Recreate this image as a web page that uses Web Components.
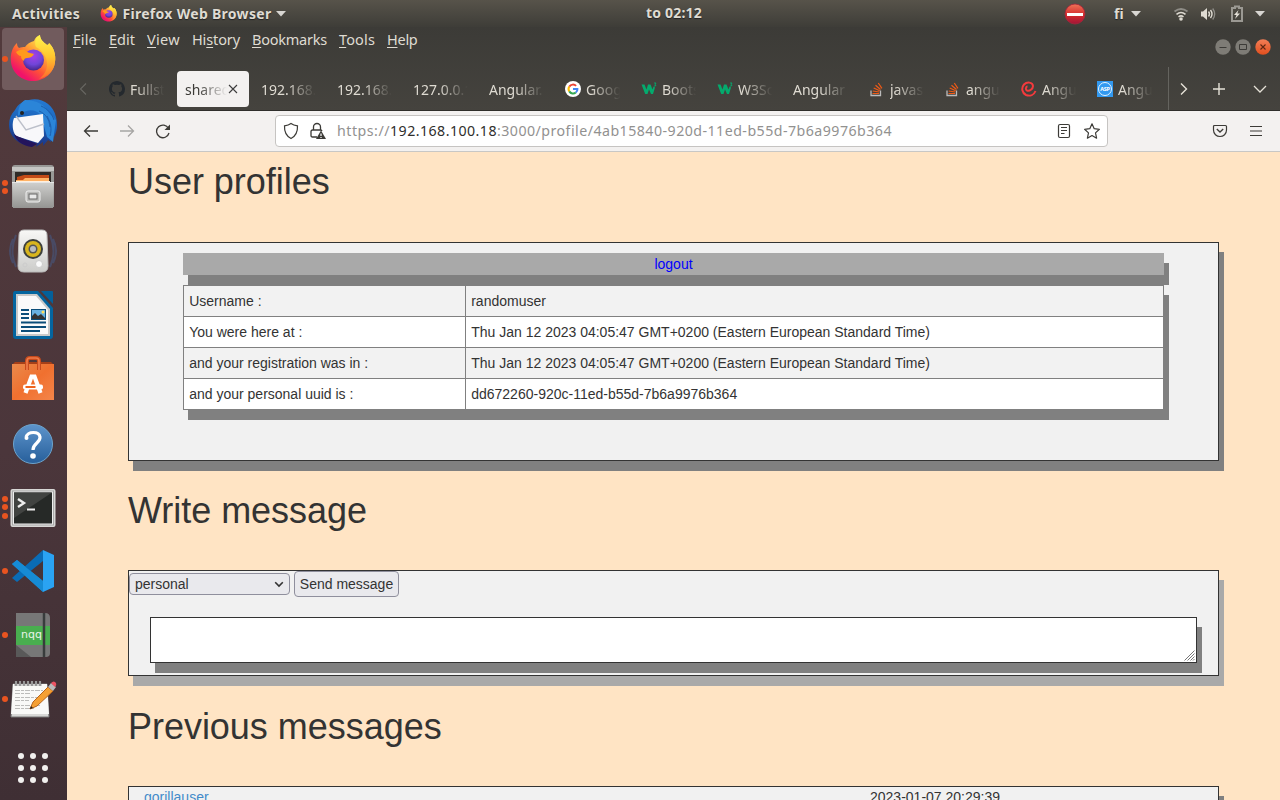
<!DOCTYPE html>
<html lang="en">
<head>
<meta charset="utf-8">
<title>User profiles</title>
<style>
html,body{margin:0;height:800px;overflow:hidden}
body{font-family:"Noto Sans","Open Sans",sans-serif;font-size:14.5px;background:#3c3b37}
</style>
</head>
<body>
<desk-top></desk-top>
<script>
const ICONS = {
firefox:[48,48,`<defs><linearGradient id="a" x1=".85" y1=".1" x2=".2" y2=".95"><stop offset=".05" stop-color="#fff44f"/><stop offset=".35" stop-color="#ffa436"/><stop offset=".62" stop-color="#ff5634"/><stop offset=".9" stop-color="#f0136a"/></linearGradient><radialGradient id="b" cx=".5" cy=".3" r=".7"><stop offset="0" stop-color="#a63ee8"/><stop offset=".6" stop-color="#7045d8"/><stop offset="1" stop-color="#45278d"/></radialGradient><linearGradient id="c" x1=".6" y1="0" x2=".6" y2="1"><stop offset="0" stop-color="#fff44f"/><stop offset=".5" stop-color="#ffc52e"/><stop offset="1" stop-color="#ff6a2c"/></linearGradient></defs>
<path d="M8 8c0 2 .6 4 2 5 2-1 4-1 6-1 2-3 5-5 9-6 1-3 3-5 6-6 0 4 3 7 7 10 1 0 2-1 2-2 5 5 7 12 6 19-1 11-11 19-22 19S3 38 2 27C1 20 3 12 8 8z" fill="url(#a)"/>
<circle cx="24.500" cy="25" r="10.500" fill="url(#b)"/>
<path d="M31 0c0 4 3 7 7 10 1 0 2-1 2-2 5 5 7 12 6 19-1 9-8 15-16 17 7-5 10-13 7-21-2-5-6-9-10-11-2-5 0-10 4-12z" fill="url(#c)"/>
<path d="M7 17c3-2 6-3 9-2 2 2 4 3 9 4-2 3-4 4-7 4-2 0-3 1-3 3-2-1-3-3-3-5-2 0-4-2-5-4z" fill="#ff9a1c"/>`],
thunderbird:[50,50,`<defs><linearGradient id="a" x1=".6" y1="0" x2=".4" y2="1"><stop offset="0" stop-color="#2479d2"/><stop offset=".5" stop-color="#1b62b8"/><stop offset="1" stop-color="#1c2c7c"/></linearGradient></defs>
<path d="M21 2c12-3 24 4 27 17 2 8 1 15-2 20l-1-3-2 8-3-2-5 6v-4l-7 5 1-4-6 3C10 47 1 38 1 27c0-6 2-11 6-15 3-6 8-9 14-10z" fill="url(#a)"/>
<path d="M17 2c12 0 20 5 24 13l7 7-3 22-6-5-6-22C27 10 17 11 10 18c0-8 2-13 7-16z" fill="#2b85d8"/>
<path d="M33 8c7 3 11 8 13 14M31 13c7 3 10 8 11 16m-3-11c4 7 5 13 3 20" stroke="#1c5fae" fill="none"/>
<path d="M6 20l29-4 1 22-6 7L8 38C4 33 4 25 6 20z" fill="#f8f8fa"/><path d="M8 18l10 14 18-6" fill="none" stroke="#bcc0ca" stroke-width="1.400"/>
<path d="M6 36c5 4 14 6 23 10l-5 3C15 48 8 43 6 36z" fill="#23145c"/><circle cx="14" cy="15" r="2" fill="#222"/>`],
files:[44,46,`<defs><linearGradient id="a" x2="0" y2="1"><stop stop-color="#d0d0ce"/><stop offset="1" stop-color="#949492"/></linearGradient></defs><path d="M1 4q0-3 3-3h36q3 0 3 3v39H1z" fill="#989896"/><path d="M1 3h42v4H1z" fill="#c5c5c3"/><path d="M4 8h36v11H4z" fill="#302a27"/><path d="M6 13l7-2h25v8H6z" fill="#c44a16"/><path d="M5 16h7l2-2h24v6H5z" fill="#ffb265"/><path d="M5 17h34v3H5z" fill="#fff0de"/><path d="M1 18h42l-1 26H2z" fill="url(#a)"/><path d="M1 18.500h42" stroke="#e5e5e5"/><rect x="15" y="27" width="14" height="11" rx="2" fill="#bcbcba" stroke="#f0f0f0"/><rect x="18" y="30" width="8" height="5" fill="#e9e9e9" stroke="#666"/>`],
speaker:[48,48,`<path d="M7 8q-7 16 0 32M4 12q-6 12 0 24M41 8q7 16 0 32m3-28q6 12 0 24" fill="none" stroke="#46577e" stroke-width="2" opacity=".6"/><defs><linearGradient id="a" x2="0" y2="1"><stop stop-color="#f8f8f6"/><stop offset="1" stop-color="#ccccca"/></linearGradient></defs><path d="M10 8q0-5 5-5h18q5 0 5 5l1 31q0 6-6 6H15q-6 0-6-6z" fill="url(#a)" stroke="#bbb"/><circle cx="24" cy="22" r="10" fill="#3d403d"/><circle cx="24" cy="22" r="8" fill="#d8b51e"/><circle cx="24" cy="22" r="4.500" fill="#555"/><circle cx="24" cy="22" r="3" fill="#b8bcc0"/><circle cx="30" cy="37" r="3.500" fill="#fafafa" stroke="#ccc"/><circle cx="16" cy="38" r="2" fill="none" stroke="#ccc"/>`],
writer:[42,50,`<path d="M3 1h23l15 17v28q0 3-3 3H4q-3 0-3-3V4q0-3 2-3z" fill="#04659f"/><path d="M29 1h11q1 0 1 1v12z" fill="#04609a"/><path d="M4 4h21l13 15v27H4z" fill="#c9c9c9"/><path d="M6 6h18l12 14v24H6z" fill="#fafafa"/><path d="M9 20h8M9 24h8M9 28h8M9 32.500h25M9 37h25M9 41h19" stroke="#0b4d79" stroke-width="2"/><path d="M19 19h15v11H19z" fill="#0b4d79"/><path d="M20 20h13v9H20z" fill="#68b1e2"/><path d="M20 29v-3l3-3 3 3 3-2 4 4v1z" fill="#333"/><circle cx="31" cy="22" r="1.500" fill="#ffdf5c"/>`],
software:[44,46,`<defs><linearGradient id="a" x2="1" y2="1"><stop stop-color="#e98a4c"/><stop offset=".5" stop-color="#f0702f"/><stop offset="1" stop-color="#f4854a"/></linearGradient></defs><path d="M1 9l3-3h36l3 3z" fill="#a63f18"/><path d="M1 8h42v36H1z" fill="url(#a)"/><path d="M16 14V5q0-3 3-3h6q3 0 3 3v9" fill="none" stroke="#c94b1c" stroke-width="4"/><path d="M16 14V5q0-3 3-3h6q3 0 3 3v9" fill="none" stroke="#ef7b49" stroke-width="1.700"/><path d="M14.500 37l6-16.500h3l6 16.500" fill="none" stroke="#fff" stroke-width="4.200"/><rect x="12" y="28.500" width="20" height="5" rx="2" fill="#fff"/><rect x="14.500" y="30" width="10" height="2" fill="#ef641d"/>`],
help:[42,42,`<defs><linearGradient id="a" x2="0" y2="1"><stop stop-color="#5d94cb"/><stop offset="1" stop-color="#275f9b"/></linearGradient></defs><circle cx="21" cy="21" r="19.500" fill="url(#a)" stroke="#6da4cc"/><path d="M14 14c2-6 13-6 14 0 .6 6-7 6-7 13" fill="none" stroke="#fff" stroke-width="3.200"/><circle cx="14.500" cy="15" r="2" fill="#fff"/><circle cx="21" cy="33" r="2.800" fill="#fff"/>`],
terminal:[46,40,`<rect x=".5" y="1" width="45" height="38" rx="2" fill="#d7d7d5"/><rect x="2.500" y="3" width="41" height="34" fill="#eee" stroke="#aaa"/><rect x="4" y="4.500" width="38" height="31" fill="#262927"/><path d="M4 4.500h38L4 30z" fill="#414341"/><path d="M8 11l6 4-6 4" fill="none" stroke="#eee" stroke-width="2.400"/><path d="M17 21.500h8" stroke="#eee" stroke-width="2"/>`],
vscode:[42,44,`<path d="M0 15l5-4 26 21v11L0 15z" fill="#1688d1"/><path d="M0 29l5 4L31 12V1L0 29z" fill="#0a6cb6"/><path d="M0 15l5-4 26 21v11z" fill="#168bd5"/><path d="M31 1l11 5v32l-11 5z" fill="#2aa3f3"/>`],
nqq:[36,46,`<path d="M1 1h29q5 0 5 5v35q0 4-4 4H1z" fill="#777"/><path d="M1 33l15 12H1z" fill="#595959"/><path d="M1 14h34v19H1z" fill="#49ae4f"/><path d="M29 1v44" stroke="#383c3c" stroke-width="2.500"/><text x="6" y="26" font-size="11" textLength="21" fill="#e8f4e8" font-family="DejaVu Sans">nqq</text>`],
notes:[48,40,`<path d="M4 5h34l2 33H2z" fill="#d8d8d6" stroke="#777"/><path d="M4 5h34l2 30H2z" fill="#f9f9f7"/><path d="M6 11.500h28M6 14.500h16M6 18.500h24M6 21.500h14M6 26.500h26M6 29.500h20" stroke="#bcbcba" stroke-dasharray="5 1 3 1"/><path d="M7 7V2M11 7V2M15 7V2M19 7V2M23 7V2M27 7V2M31 7V2" stroke="#555" stroke-width="2.500"/><path d="M7 7V2M11 7V2M15 7V2M19 7V2M23 7V2M27 7V2M31 7V2" stroke="#ddd"/><path d="M21 30l3-7 15-15 5 4-16 15z" fill="#f5a033" stroke="#b8651b"/><path d="M39 8l3-4 5 4-3 4z" fill="#b9b9b9"/><path d="M42 4q3-3 5 0 1 2-1 4z" fill="#ec5262"/><path d="M21 30l1-3 2 2z" fill="#222"/>`],
grid:[30,30,[3,15,27].map(y=>[3,15,27].map(x=>`<circle cx="${x}" cy="${y}" r="3" fill="#f1f0ee"/>`).join('')).join('')],
tri:[10,6,`<path d="M0 0h10L5 5.500z" fill="#d8d6d2"/>`],
stop:[22,22,`<defs><linearGradient id="a" x2="0" y2="1"><stop stop-color="#f07458"/><stop offset=".55" stop-color="#d42a2c"/><stop offset="1" stop-color="#a01538"/></linearGradient></defs><circle cx="11" cy="11" r="10" fill="url(#a)" stroke="#a8243a" stroke-width=".8"/><path d="M3 10h16v3H3z" fill="#fff"/>`],
wifi:[16,14,`<path d="M1.500 4.500q6.500-5 13 0" fill="none" stroke="#8e8c86" stroke-width="1.800"/><path d="M3.500 7.300q4.500-3.500 9 0M5.500 9.800q2.500-1.800 5 0" fill="none" stroke="#dfdbd2" stroke-width="1.600"/><circle cx="8" cy="12" r="1.800" fill="#dfdbd2"/>`],
sound:[16,14,`<path d="M1 4.500h2L7 1v12L3 9.500H1z" fill="#dfdbd2"/><path d="M8.500 4.500q2 2.500 0 5M10.500 3q3 4 0 8" fill="none" stroke="#dfdbd2" stroke-width="1.400"/><path d="M12.700 1.500q4 5.500 0 11" fill="none" stroke="#8e8c86" stroke-width="1.300"/>`],
battery:[14,18,`<path d="M5 3V1.500h4V3h3v13H2V3z" fill="none" stroke="#9b9993" stroke-width="2"/><path d="M8.500 5L4 10h2.500L5 14l5-5.500H7.300z" fill="#e5e1d8"/>`],
min:[16,16,`<circle cx="8" cy="8" r="7.700" fill="#7e7c76"/><path d="M4.500 8.500h7" stroke="#3c3b37"/>`],
max:[16,16,`<circle cx="8" cy="8" r="7.700" fill="#7e7c76"/><path d="M4.500 5.500h7v5h-7z" fill="none" stroke="#3c3b37"/>`],
close:[16,16,`<defs><linearGradient id="a" x2="0" y2="1"><stop stop-color="#f37e56"/><stop offset="1" stop-color="#e14f1e"/></linearGradient></defs><circle cx="8" cy="8" r="7.700" fill="url(#a)"/><path d="M5.500 5.500l5 5m0-5l-5 5" stroke="#5e2713" stroke-width="1.100"/>`],
left:[8,14,`<path d="M7 1.500L1.500 7 7 12.500" fill="none" stroke="#686762" stroke-width="1.100"/>`],
right:[8,14,`<path d="M1 1.500L6.500 7 1 12.500" fill="none" stroke="#e6e2d8" stroke-width="1.400"/>`],
down:[14,8,`<path d="M1 1l6 6 6-6" fill="none" stroke="#e6e2d8" stroke-width="1.300"/>`],
plus:[14,14,`<path d="M7 1v12M1 7h12" stroke="#e6e2d8" stroke-width="1.400"/>`],
x:[10,10,`<path d="M1 1l8 8M9 1L1 9" stroke="#3d3d3d" stroke-width="1.100"/>`],
back:[16,14,`<path d="M15 7H1.500M7 1.500L1.500 7 7 12.500" fill="none" stroke="#3c3b37" stroke-width="1.300"/>`],
fwd:[16,14,`<path d="M1 7h13.500M9 1.500L14.500 7 9 12.500" fill="none" stroke="#a7a6a4" stroke-width="1.300"/>`],
reload:[16,16,`<path d="M13.500 5.500A6.300 6.300 0 1 0 14 10" fill="none" stroke="#3c3b37" stroke-width="1.300"/><path d="M15 1.500v5.500H9.500z" fill="#3c3b37"/>`],
shield:[16,18,`<path d="M8 1.500c2 1.500 4 2 6.500 2.300C14.800 10 13 14 8 16.500 3 14 1.200 10 1.500 3.800 4 3.500 6 3 8 1.500z" fill="none" stroke="#3c3b37" stroke-width="1.200"/>`],
lock:[18,18,`<path d="M4.500 8V5a3.500 3.500 0 0 1 7 0v3M8 15H3.500q-1.500 0-1.500-1.500V9.500Q2 8 3.500 8h8q1 0 1.500 1" fill="none" stroke="#3c3b37" stroke-width="1.300"/><path d="M12 8.500l5 8.500H7z" fill="#3c3b37"/><path d="M12 11.500v2.500m0 1v1" stroke="#fff" stroke-width="1.200"/>`],
reader:[14,16,`<rect x="1.500" y="1.500" width="11" height="13" rx="1.500" fill="none" stroke="#3c3b37" stroke-width="1.200"/><path d="M4 4.500h6M4 7.500h6M4 10.500h3.500" stroke="#3c3b37"/>`],
star:[18,18,`<path d="M9 1.800l2.200 4.900 5.200.6-3.900 3.600 1.100 5.300L9 13.600l-4.600 2.600 1.100-5.300-3.900-3.600 5.200-.6z" fill="none" stroke="#3c3b37" stroke-width="1.200" stroke-linejoin="round"/>`],
pocket:[16,14,`<path d="M2.500 1.500h11q1 0 1 1V6c0 4-3 6.500-6.500 6.500S1.500 10 1.500 6V2.500q0-1 1-1z" fill="none" stroke="#3c3b37" stroke-width="1.200"/><path d="M4.800 5L8 8l3.200-3" fill="none" stroke="#3c3b37" stroke-width="1.300"/>`],
menu:[14,12,`<path d="M1 1.500h12M1 6h12M1 10.500h12" stroke="#3c3b37" stroke-width="1.200"/>`],
github:[16,16,`<path fill="#24292e" d="M8 0C3.600 0 0 3.600 0 8c0 3.500 2.300 6.500 5.500 7.600.4.100.5-.2.500-.4v-1.400c-2.200.5-2.700-1-2.700-1-.4-.9-.9-1.200-.9-1.200-.7-.5.100-.5.100-.5.800.1 1.200.8 1.200.8.700 1.300 1.900.9 2.300.7.100-.5.300-.9.500-1.100-1.800-.2-3.600-.9-3.600-4 0-.9.300-1.600.8-2.100-.1-.2-.4-1 .1-2.200 0 0 .7-.2 2.200.8a7.600 7.600 0 0 1 4 0c1.500-1 2.200-.8 2.200-.8.400 1.100.2 1.900.1 2.200.5.500.8 1.200.8 2.100 0 3.100-1.900 3.700-3.700 3.900.3.300.6.800.6 1.500v2.200c0 .2.100.5.600.4A8 8 0 0 0 16 8c0-4.400-3.600-8-8-8z"/>`],
google:[16,16,`<circle cx="8" cy="8" r="8" fill="#fff"/><g fill="none" stroke-width="2"><path d="M4.300 5.600A4.400 4.400 0 0 1 11.100 4.900" stroke="#ea4335"/><path d="M4.300 10.400a4.400 4.400 0 0 1 0-4.800" stroke="#fbbc05"/><path d="M4.300 10.400a4.400 4.400 0 0 0 6.500 1.100" stroke="#34a853"/><path d="M10.800 11.500A4 4 0 0 0 12.400 8H8" stroke="#4285f4"/></g>`],
w3:[16,16,`<path d="M.5 3.500h3l2 5 1.500-5h2.500l2 5 1-3 1.500 1-2 6.500h-2L8 8.500 6.500 13H4.200z" fill="#04aa6d"/><path d="M13 2h2l-1 1.500q1.500.2.500 1.500h-1.500" fill="none" stroke="#04aa6d" stroke-width=".9"/>`],
so:[16,16,`<path d="M2 9.500v5h9.500v-5" fill="none" stroke="#bcbbbb" stroke-width="1.300"/><path d="M3.500 12.500H10M3.700 10l6.500 1M4.700 7l6 2.800M6.500 4.200l5 4.300M9.300 2l3.600 5.300" stroke="#ef5a16" stroke-width="1.200"/>`],
edureka:[16,16,`<path d="M14.500 10C13 14 9 15.500 5 14 1 12 0 7 3 3.500 6 .5 11.500 1 12 5c0 3-3.500 5.500-6 4.500-2-1-1-4 .5-4" fill="none" stroke="#f43a3d" stroke-width="2"/>`],
asp:[16,16,`<path d="M0 0h16v16H0z" fill="#3299f0"/><circle cx="8" cy="8" r="6.500" fill="none" stroke="#e4f3ff"/><text x="3.200" y="10.200" font-size="5.500" font-weight="bold" fill="#fff" textLength="9.600">ASP</text>`],
chev:[10,7,`<path d="M1.200 1.200L5 5l3.800-3.800" fill="none" stroke="#333" stroke-width="1.600"/>`],
grip:[11,11,`<path d="M.5 10.500l10-10M3.500 10.500l7-7M6.500 10.500l4-4M9 10.500l1.500-1.500" stroke="#777" stroke-width="1"/>`]
};
function define(name, css, html, setup){
  const t=document.createElement('template');
  t.innerHTML=`<style>${css}</style>${html}`;
  customElements.define(name,class extends HTMLElement{
    connectedCallback(){
      if(this.shadowRoot)return;
      this.attachShadow({mode:'open'}).append(t.content.cloneNode(true));
      if(setup)setup(this,this.shadowRoot);
    }
  });
}
define('ui-icon',':host{display:block;flex:none}svg{display:block}','',(el,r)=>{
  const [w,h,b]=ICONS[el.getAttribute('name')];
  r.innerHTML+=`<svg width="${w}" height="${h}" viewBox="0 0 ${w} ${h}">${b}</svg>`;
});
define('dock-item',`:host{display:flex;height:62px;margin:0 3px 2px 2px;border-radius:4px;align-items:center;justify-content:center;position:relative}
:host([active]){background:#715b5d}
.dots{position:absolute;left:0;top:0;bottom:0;display:flex;flex-direction:column;justify-content:center;gap:2.500px}
i{width:6px;height:6px;border-radius:50%;background:#e95420}`,'<div class="dots"></div><slot></slot>',(el,r)=>{
  r.querySelector('.dots').innerHTML='<i></i>'.repeat(+el.getAttribute('dots')||0);
});
define('side-dock',`:host{display:block;box-sizing:border-box;width:67px;padding-top:1px;background:linear-gradient(#523a3c,#4b363b 55%,#3f2f34)}
.apps{margin-top:7px}.low{padding-top:2px;box-sizing:border-box}`,
`<dock-item active dots="1"><ui-icon name="firefox"></ui-icon></dock-item><dock-item><ui-icon name="thunderbird"></ui-icon></dock-item><dock-item dots="2"><ui-icon name="files"></ui-icon></dock-item><dock-item><ui-icon name="speaker"></ui-icon></dock-item><dock-item><ui-icon name="writer"></ui-icon></dock-item><dock-item><ui-icon name="software"></ui-icon></dock-item><dock-item class="low"><ui-icon name="help"></ui-icon></dock-item><dock-item class="low" dots="3"><ui-icon name="terminal"></ui-icon></dock-item><dock-item dots="1"><ui-icon name="vscode"></ui-icon></dock-item><dock-item dots="1"><ui-icon name="nqq"></ui-icon></dock-item><dock-item dots="1"><ui-icon name="notes"></ui-icon></dock-item><dock-item class="apps"><ui-icon name="grid"></ui-icon></dock-item>`);
define('top-bar',`:host{display:grid;grid-template-columns:634px auto 1fr;align-items:center;height:27px;background:linear-gradient(#57534a,#3e3d38);color:#dfdbd2;font-weight:700;font-size:14px;line-height:27px;padding:0 15px 0 12px;text-shadow:0 1px 1px #222;box-sizing:border-box}
div{display:flex;align-items:center}
.r{justify-content:flex-end}
.clock{line-height:25px;margin-bottom:2px}`,
`<div><fit-label w="68">Activities</fit-label><ui-icon name="firefox" style="zoom:.36;margin:0 14px 0 56px"></ui-icon><fit-label w="149">Firefox Web Browser</fit-label><ui-icon name="tri" style="margin-left:5px"></ui-icon></div>
<fit-label w="56" class="clock">to 02:12</fit-label>
<div class="r"><ui-icon name="stop" style="margin-right:28px"></ui-icon><fit-label w="10">fi</fit-label><ui-icon name="tri" style="margin:0 32px 0 7px"></ui-icon><ui-icon name="wifi" style="margin-right:11px"></ui-icon><ui-icon name="sound" style="margin-right:14px"></ui-icon><ui-icon name="battery" style="margin-right:11px"></ui-icon><ui-icon name="tri"></ui-icon></div>`);
define('menu-bar',`:host{display:flex;justify-content:space-between;height:39px;padding:0 9px 0 6px;color:#dfdbd2;font-size:14.5px;line-height:24px}
div{display:flex;gap:12px}.w{gap:4px;padding-top:12px}u{text-underline-offset:2px;text-decoration-thickness:1px}`,
`<div><fit-label w="24"><u>F</u>ile</fit-label><fit-label w="26"><u>E</u>dit</fit-label><fit-label w="33"><u>V</u>iew</fit-label><fit-label w="48">Hi<u>s</u>tory</fit-label><fit-label w="75"><u>B</u>ookmarks</fit-label><fit-label w="36"><u>T</u>ools</fit-label><fit-label w="30.500"><u>H</u>elp</fit-label></div><div class="w"><ui-icon name="min"></ui-icon><ui-icon name="max"></ui-icon><ui-icon name="close"></ui-icon></div>`);
define('browser-tab',`:host{display:flex;box-sizing:border-box;width:72px;height:36px;margin:5px 2px 0;padding:0 8px;align-items:center;border-radius:4px;color:#dfdbd2;gap:5px;font-size:14px}
:host([selected]){background:#f3f1f0;color:#3c3b37;gap:0}
span{flex:1;min-width:0;overflow:hidden;white-space:nowrap;line-height:26px;padding-top:2px;-webkit-mask:linear-gradient(90deg,#000 calc(100% - 30px),transparent 98%)}
:host([selected]) ui-icon{margin-right:3px}`,'<slot name="icon"></slot><span><slot></slot></span>',(el,r)=>{
  if(el.hasAttribute('selected'))r.innerHTML+='<ui-icon name="x"></ui-icon>';
});
define('tab-strip',`:host{display:flex;align-items:flex-start;height:45px;box-sizing:border-box;border-bottom:1px solid #2f2e2b}
.l{width:32px;display:flex;height:46px;align-items:center;box-sizing:border-box;padding-left:12px}
.e{display:flex;align-items:center;border-left:1px solid #65645f;padding:1px 13px 0 11px;box-sizing:border-box;height:43px;margin:1px 0 0 auto;width:112px;justify-content:space-between}`,
`<div class="l"><ui-icon name="left"></ui-icon></div>`+
[['github','Fullst'],['','shared'],['','192.168.'],['','192.168.'],['','127.0.0.1'],['','Angular.'],['google','Goog'],['w3','Boots'],['w3','W3Sc'],['','Angular'],['so','javas'],['so','angul'],['edureka','Angu'],['asp','Angul']].map(([i,t],n)=>`<browser-tab ${n==1?'selected':''}>${i?`<ui-icon slot="icon" name="${i}"></ui-icon>`:''}${t}</browser-tab>`).join('')+
`<div class="e"><ui-icon name="right"></ui-icon><ui-icon name="plus" style="margin-left:10px"></ui-icon><ui-icon name="down" style="margin-left:14px"></ui-icon></div>`);
define('nav-bar',`:host{display:flex;align-items:center;box-sizing:border-box;height:41px;background:#f3f1f0;border-bottom:1px solid #c8c7c5;padding:0 17px 0 16px}
.url{box-sizing:border-box;display:flex;align-items:center;width:833px;height:32px;background:#fff;border:1px solid #c6c4c2;border-radius:4px;margin-left:104px;padding:0 6px 0 7px;color:#929190;font-size:14.2px;line-height:30px}
b{font-weight:400;color:#2f2e2c}`,
`<ui-icon name="back"></ui-icon><ui-icon name="fwd" style="margin:0 20px"></ui-icon><ui-icon name="reload"></ui-icon>
<div class="url"><ui-icon name="shield"></ui-icon><ui-icon name="lock" style="margin:0 10px 0 10px"></ui-icon><fit-label w="53">https://</fit-label><fit-label w="107"><b>192.168.100.18</b></fit-label><fit-label w="395">:3000/profile/4ab15840-920d-11ed-b55d-7b6a9976b364</fit-label><ui-icon name="reader" style="margin:0 12px 0 auto"></ui-icon><ui-icon name="star"></ui-icon></div>
<ui-icon name="pocket" style="margin:0 21px 0 auto"></ui-icon><ui-icon name="menu"></ui-icon>`);
define('page-title',':host{display:block;height:40px;font-size:36px;line-height:39.6px;letter-spacing:-.03px;color:#333}','<slot></slot>');
define('shadow-card',`:host{display:block;box-sizing:border-box;background:#f1f1f1;border:1px solid #333;box-shadow:5px 10px var(--shade,#808080)}`,'<slot></slot>');
define('profile-table',`:host{display:block;margin:10px 54px 0}
.out{height:22px;line-height:22px;text-align:center;background:#a9a9a9;color:#00f;box-shadow:5px 10px #808080}
.t{display:grid;grid-template-columns:281px 1fr;gap:1px;margin-top:10px;background:#808080;border:1px solid #808080;box-shadow:5px 10px #808080;position:relative}
.t div{height:30px;line-height:30px;padding-left:5.200px;background:#fff}.t .a{background:#f2f2f2}`,
`<div class="out">logout</div><div class="t"><div class="a">Username :</div><div class="a">randomuser</div><div>You were here at :</div><div>Thu Jan 12 2023 04:05:47 GMT+0200 (Eastern European Standard Time)</div><div class="a">and your registration was in :</div><div class="a">Thu Jan 12 2023 04:05:47 GMT+0200 (Eastern European Standard Time)</div><div>and your personal uuid is :</div><div>dd672260-920c-11ed-b55d-7b6a9976b364</div></div>`);
define('message-form',`:host{display:block}
.c{display:flex;gap:4px;height:26px;align-items:center}
.s,.b{box-sizing:border-box;background:#e9e9ed;border:1px solid #8f8f9d;border-radius:4px;display:flex;align-items:center}
.s{width:161px;height:22px;padding:0 5px;justify-content:space-between}
.b{width:105px;height:26px;justify-content:center;white-space:nowrap}
.m{box-sizing:border-box;height:46px;margin:20px 21px 0;background:#fff;border:1px solid #333;box-shadow:5px 10px #808080;display:flex;align-items:flex-end;justify-content:flex-end;padding:1px}`,
`<div class="c"><div class="s">personal<ui-icon name="chev"></ui-icon></div><div class="b">Send message</div></div><div class="m"><ui-icon name="grip"></ui-icon></div>`);
define('message-row',`:host{display:flex;line-height:20px;padding-left:15px}div{width:726px;color:#428bca}`,'<div><slot name="who"></slot></div><slot></slot>');
define('profile-page',`:host{display:block;overflow:hidden;background:#ffe4c4;padding:10px 61px 0;font:14px "Liberation Sans",Arial,sans-serif;color:#333}`,
`<page-title>User profiles</page-title><shadow-card style="height:219px;margin:40px 0 30px"><profile-table></profile-table></shadow-card>
<page-title>Write message</page-title><shadow-card style="height:106px;margin:39px 0 31px;--shade:#a9a9a9"><message-form></message-form></shadow-card>
<page-title>Previous messages</page-title><shadow-card style="height:106px;margin:39px 0 0"><message-row><span slot="who">gorillauser</span>2023-01-07 20:29:39</message-row></shadow-card>`);
define('browser-window',`:host{display:grid;grid-template-rows:39px 45px 41px 1fr;grid-template-columns:1213px;background:linear-gradient(#3c3b37,#45433e 84px);min-height:0}`,
'<menu-bar></menu-bar><tab-strip></tab-strip><nav-bar></nav-bar><profile-page></profile-page>');
define('desk-top',`:host{display:grid;grid-template:27px 773px / 67px 1213px;width:1280px;height:800px;overflow:hidden}top-bar{grid-column:1/3}`,
'<top-bar></top-bar><side-dock></side-dock><browser-window></browser-window>');
/* A one-line label whose letter spacing is set so that it fills the width in "w". */
define('fit-label',':host{display:block;flex:none;white-space:nowrap}span{display:inline-block}','<span><slot></slot></span>',(el,r)=>{
  const w=+el.getAttribute('w'),s=r.querySelector('span');
  s.style.letterSpacing=(w-s.getBoundingClientRect().width)/el.textContent.length+'px';
  el.style.width=w+'px';
});
</script>
</body>
</html>
